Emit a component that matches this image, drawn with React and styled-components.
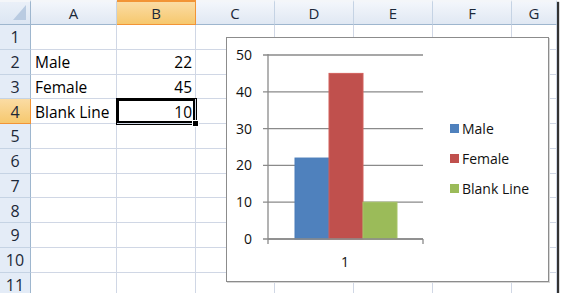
import { Fragment } from 'react';
import styled, { createGlobalStyle, css } from 'styled-components';

const columns = ['A', 'B', 'C', 'D', 'E', 'F', 'G'];
const rows = [1, 2, 3, 4, 5, 6, 7, 8, 9, 10, 11];

const cells = {
  2: { A: 'Male', B: 22 },
  3: { A: 'Female', B: 45 },
  4: { A: 'Blank Line', B: 10 },
};

const series = [
  { name: 'Male', value: 22, color: '#4f81bd', edge: '#4a7dba' },
  { name: 'Female', value: 45, color: '#c0504d', edge: '#d2605c' },
  { name: 'Blank Line', value: 10, color: '#9bbb59', edge: '#a6c466' },
];

// plot geometry (relative to the chart's inner box)
const axisX = 41;
const axisRight = 196;
const baseY = 201;
const step = 36.8;
const ticks = [0, 10, 20, 30, 40, 50];
const barX = 68;
const barW = 34;

export default function App() {
  return (
    <>
      <GlobalStyle />
      <Sheet>
        <Grid>
          <Corner>
            <svg width="14" height="16" viewBox="0 0 14 16">
              <polygon points="13,0 13,15 0,15" fill="#b9cbe1" />
            </svg>
          </Corner>
          {columns.map((c) => (
            <ColHeader key={c} $selected={c === 'B'}>
              {c}
            </ColHeader>
          ))}
          {rows.map((r) => (
            <Fragment key={r}>
              <RowHeader $selected={r === 4}>{r}</RowHeader>
              {columns.map((c) => {
                const v = cells[r] && cells[r][c];
                return (
                  <Cell key={c} $numeric={typeof v === 'number'} $active={r === 4 && c === 'B'}>
                    {v}
                  </Cell>
                );
              })}
            </Fragment>
          ))}
        </Grid>

        <Chart>
          <Plot width="210" height="243" viewBox="0 0 210 243">
            {ticks.map((t, i) => {
              const y = baseY - i * step;
              return (
                <g key={t}>
                  <line x1={axisX - 5} y1={y} x2={axisRight} y2={y} stroke="#8a8a8a" strokeWidth="1.3" />
                  <text x="25" y={y + 5} textAnchor="end">
                    {t}
                  </text>
                </g>
              );
            })}
            {series.map((s, i) => {
              const h = (s.value / 10) * step;
              return (
                <rect
                  key={s.name}
                  x={barX + i * barW}
                  y={baseY - h}
                  width={barW}
                  height={h}
                  fill={s.color}
                  stroke={s.edge}
                  strokeWidth="1"
                />
              );
            })}
            <line x1={axisX} y1={baseY - 5 * step - 1} x2={axisX} y2={baseY + 5} stroke="#8a8a8a" strokeWidth="1.3" />
            <line x1={axisX} y1={baseY} x2={axisRight} y2={baseY} stroke="#8a8a8a" strokeWidth="1.3" />
            <line x1={axisRight} y1={baseY} x2={axisRight} y2={baseY + 5} stroke="#8a8a8a" strokeWidth="1.3" />
            <text x="118" y="229" textAnchor="middle">
              1
            </text>
          </Plot>
          <Legend>
            {series.map((s) => (
              <LegendItem key={s.name}>
                <Swatch $color={s.color} />
                {s.name}
              </LegendItem>
            ))}
          </Legend>
        </Chart>
      </Sheet>
    </>
  );
}

const GlobalStyle = createGlobalStyle`
  body {
    margin: 0;
    background: #fff;
    font-family: "Open Sans", "Noto Sans", sans-serif;
  }
`;

const Sheet = styled.div`
  position: relative;
  width: 557px;
  height: 293px;
  overflow: hidden;
  background: #fff;
  box-shadow: 2px 2px 1px rgba(0, 0, 0, 0.8);
`;

const Grid = styled.div`
  display: grid;
  grid-template-columns: 31px 86px 79px 79px 79px 79px 79px 1fr;
  grid-template-rows: 25px repeat(11, 24.75px);
`;

const headerBase = css`
  box-sizing: border-box;
  display: flex;
  align-items: center;
  justify-content: center;
  color: #1c2838;
`;

const orange = css`
  background: linear-gradient(#fbdca4, #f6c86e);
  border-color: #f29436;
`;

const Corner = styled.div`
  box-sizing: border-box;
  display: flex;
  align-items: flex-end;
  justify-content: flex-end;
  padding: 0 3px 3px 0;
  background: linear-gradient(#eaf0f8, #dce6f3);
  border-right: 1px solid #9eb6ce;
  border-bottom: 1px solid #9eb6ce;
  border-top: 2px solid #f4f6f9;
`;

const ColHeader = styled.div`
  ${headerBase}
  font-size: 15px;
  background: linear-gradient(#f3f6fb, #e0e8f3);
  border-top: 2px solid #f4f6f9;
  border-right: 1px solid #c5d3e4;
  border-bottom: 1px solid #9eb6ce;
  ${(p) => p.$selected && orange}
`;

const RowHeader = styled.div`
  ${headerBase}
  font-size: 16px;
  padding-top: 1px;
  background: #e4ecf7;
  border-right: 1px solid #9eb6ce;
  border-bottom: 1px solid #c5d3e4;
  ${(p) => p.$selected && orange}
`;

const Cell = styled.div`
  position: relative;
  box-sizing: border-box;
  display: flex;
  align-items: center;
  justify-content: ${(p) => (p.$numeric ? 'flex-end' : 'flex-start')};
  padding: 1px 3px 0 4px;
  border-right: 1px solid #d0d7e5;
  border-bottom: 1px solid #d0d7e5;
  font-size: 15.5px;
  color: #000;
  white-space: nowrap;
  ${(p) =>
    p.$active &&
    css`
      box-shadow: inset 0 0 0 2px #000, 0 0 0 1px #000;
      z-index: 1;
      &::after {
        content: '';
        position: absolute;
        right: -4px;
        bottom: -4px;
        width: 5px;
        height: 5px;
        background: #000;
        border: 1px solid #fff;
      }
    `}
`;

const Chart = styled.div`
  position: absolute;
  left: 226px;
  top: 37px;
  width: 323px;
  height: 245px;
  box-sizing: border-box;
  border: 1px solid #8c8c8c;
  background: #fff;
  display: flex;
  z-index: 2;
  box-shadow: 1px 1px 0 #d6d6d6;
`;

const Plot = styled.svg`
  display: block;
  flex: none;
  font-family: "Open Sans", "Noto Sans", sans-serif;
  font-size: 14px;
  fill: #111;
`;

const Legend = styled.div`
  display: flex;
  flex-direction: column;
  justify-content: center;
  padding-left: 13px;
  padding-bottom: 2px;
`;

const LegendItem = styled.div`
  display: flex;
  align-items: center;
  gap: 3px;
  height: 30px;
  font-size: 14px;
  color: #111;
  white-space: nowrap;
`;

const Swatch = styled.span`
  width: 9px;
  height: 9px;
  background: ${(p) => p.$color};
`;
